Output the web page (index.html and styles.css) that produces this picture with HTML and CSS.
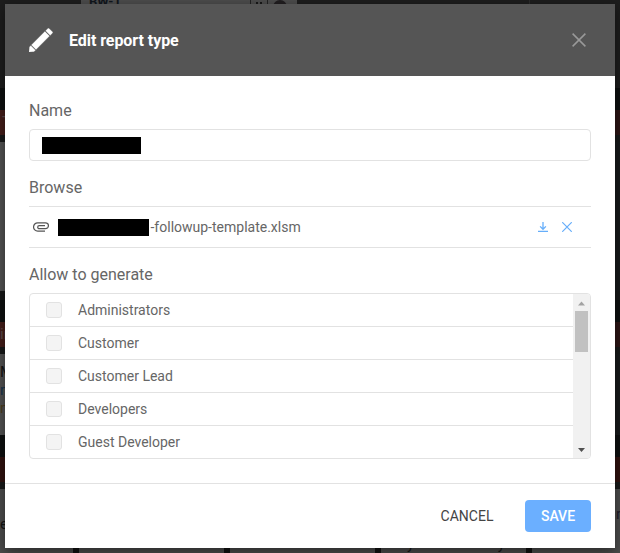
FILE: index.html
```html
<!DOCTYPE html>
<html lang="en">
<head>
<meta charset="utf-8">
<title>Edit report type</title>
<link rel="stylesheet" href="styles.css">
</head>
<body>
<div class="board" aria-hidden="true">
  <div class="lane lane-top"><span class="top-card"><b>BW-1</b><i class="pager"></i><i class="avatar"></i></span><span class="top-line"></span></div>
  <div class="gap"></div>
  <div class="bar">T</div>
  <div class="shade"></div>
  <div class="lane lane-first"><span class="side-card"></span></div>
  <div class="shade shade-short"></div>
  <div class="gap"></div>
  <div class="bar bar-mid">in</div>
  <div class="shade"></div>
  <div class="lane lane-second"><span class="side-card"><span>M</span><span class="blue">m</span><span class="gold">m</span></span></div>
  <div class="gap"></div>
  <div class="bar bar-low"></div>
  <div class="shade"></div>
  <div class="lane lane-cards"><span>e</span><span></span><span></span><span class="cut">y y</span><span class="last">r</span></div>
</div>
<div class="overlay">
<section class="modal" role="dialog">
  <header class="modal-header">
    <svg class="pencil" width="24" height="24" viewBox="0 0 24 24"><path d="M0 24 .6 18.900 1.800 17.700 6.300 22.200 5.100 23.400zM2.500 17 15.900 3.600 20.400 8.100 7 21.500zM16.700 2.800 19 .5 20 .5 23.500 4 23.500 5 21.200 7.300z" fill="#fff" stroke="#fff" stroke-width=".3"/></svg>
    <h1>Edit report type</h1>
    <svg class="close" width="14" height="14" viewBox="0 0 14 14"><path d="M.6.6 13.400 13.400M13.400.6.6 13.400" stroke="#999" stroke-width="1.500"/></svg>
  </header>
  <div class="modal-body">
    <label class="label">Name</label>
    <div class="input"><span class="redacted"></span></div>
    <div class="label">Browse</div>
    <div class="file">
      <svg class="clip" width="16" height="10" viewBox="0 0 16 10"><path d="M12 9.100H4.700a4.150 4.150 0 0 1 0-8.300h7.800a2.950 2.950 0 0 1 0 5.900H6.200a1.500 1.500 0 0 1 0-3H12" fill="none" stroke="#555" stroke-width="1.200"/></svg>
      <span class="redacted redacted-file"></span><span class="file-name">-followup-template.xlsm</span>
      <svg class="download" width="10" height="10" viewBox="0 0 10 10"><path d="M5 0v7M2.100 4.400 5 7.300l2.900-2.900M0 9.500h10" fill="none" stroke="#66aefa" stroke-width="1.300"/></svg>
      <svg class="remove" width="10" height="10" viewBox="0 0 10 10"><path d="m.2.2 9.600 9.600M9.800.2.2 9.800" stroke="#66aefa" stroke-width="1.200"/></svg>
    </div>
    <div class="label">Allow to generate</div>
    <div class="picker">
      <ul>
        <li><i class="check"></i>Administrators</li>
        <li><i class="check"></i>Customer</li>
        <li><i class="check"></i>Customer Lead</li>
        <li><i class="check"></i>Developers</li>
        <li><i class="check"></i>Guest Developer</li>
      </ul>
      <div class="scrollbar">
        <svg width="17" height="17" viewBox="0 0 17 17"><path d="M5 11.500h7L8.500 7.500z" fill="#a3a3a3"/></svg>
        <span class="thumb"></span>
        <svg class="down" width="17" height="17" viewBox="0 0 17 17"><path d="M5 7h7l-3.500 4z" fill="#505050"/></svg>
      </div>
    </div>
  </div>
  <footer class="modal-footer">
    <button class="cancel">CANCEL</button>
    <button class="save">SAVE</button>
  </footer>
</section>
</div>
</body>
</html>
```
FILE: styles.css
```css
* { box-sizing: border-box; }
body {
  margin: 0;
  height: 553px;
  overflow: hidden;
  position: relative;
  background: #181a1b;
  color: #666;
  font-family: Roboto, "Liberation Sans", sans-serif;
}

/* dimmed board behind the dialog */
.board { height: 553px; font-size: 15px; line-height: 18px; color: #141414; }
.gap { height: 22px; background: #0e1010; }
.bar { height: 25px; padding: 3px 0 0 2px; color: #5c4a49; background: linear-gradient(90deg, #441e1a 50%, #2c1515 50%); }
.bar-mid { padding-left: 0; }
.bar-low { background: #30120f; }
.shade { height: 7px; background: #181919; }
.shade-short { height: 9px; }
.lane { display: flex; overflow: hidden; }
.lane-top { height: 88px; background: #1d1d1d; }
.top-card {
  display: flex;
  width: 216px;
  height: 76px;
  margin-left: 81px;
  padding-left: 8px;
  background: #4c4c4c;
  color: #11161c;
  font-size: 13px;
  line-height: 14px;
}
.top-card b { margin-top: -5px; }
.pager { width: 18px; height: 8px; margin-left: auto; border: solid #222; border-width: 0 1px; background: radial-gradient(circle at 6px 3px, #181818 1px, transparent 1.5px), radial-gradient(circle at 10px 3px, #181818 1px, transparent 1.5px); }
.avatar { width: 14px; height: 14px; margin: 0 10px 0 5px; border-radius: 50%; background: #211e20; }
.top-line { width: 1px; height: 4px; margin-left: 232px; background: #2b2b2b; }
.lane-first { height: 149px; }
.lane-second { height: 81px; }
.side-card { width: 10px; height: 100%; background: #525252; }
.lane-second .side-card { display: flex; flex-direction: column; padding-top: 9px; }
.blue { color: #17324c; }
.gold { color: #4a3c1c; }
.lane-cards { height: 64px; gap: 6px; background: #111; }
.lane-cards span { flex: 0 0 145px; background: #4c4c4c; }
.lane-cards span:first-child { flex-basis: 73px; padding-top: 26px; }
.lane-cards .cut { padding: 46px 0 0 26px; word-spacing: 80px; }
.lane-cards .last { flex: 1; padding: 16px 0 0 84px; color: #211a29; }

/* dialog */
.overlay { position: absolute; inset: 4px 5px 5px; }
.modal {
  display: flex;
  flex-direction: column;
  height: 544px;
  background: #fff;
  box-shadow: 0 4px 12px rgba(0, 0, 0, .45);
}
.modal-header { display: flex; align-items: center; height: 72px; padding: 0 29px 0 24px; background: #555; }
.modal-header h1 { margin: 2px 0 0 16px; color: #fff; font-size: 16px; font-weight: 700; line-height: 20px; letter-spacing: -.06px; }
.close { margin-left: auto; }
.modal-body { flex: 1; padding: 24px 24px 0; }
.label { display: block; height: 19px; margin-bottom: 10px; font-size: 16px; line-height: 21px; }
.input { display: flex; align-items: center; height: 32px; margin-bottom: 16px; padding-left: 12px; border: 1px solid #e2e2e2; border-radius: 4px; }
.redacted { width: 99px; height: 17px; background: #000; }
.input .redacted { margin-top: 1px; }
.file { display: flex; align-items: center; height: 42px; margin-bottom: 16px; padding: 0 19px 0 4px; border: solid #e2e2e2; border-width: 1px 0; font-size: 14px; }
.clip { margin-right: 9px; }
.redacted-file { width: 91px; margin-top: 1px; }
.file-name { margin-left: 1.500px; }
.download { margin-left: auto; }
.remove { margin-left: 14px; }
.picker { display: flex; height: 166px; border: 1px solid #e2e2e2; border-radius: 4px; overflow: hidden; }
.picker ul { flex: 1; margin: 0; padding: 0; list-style: none; }
.picker li { display: flex; align-items: center; height: 33px; padding-left: 16px; border-bottom: 1px solid #e2e2e2; font-size: 14px; }
.picker li:last-child { border-bottom: 0; height: 32px; }
.check { width: 16px; height: 16px; margin-right: 16px; border: 1px solid #e2e2e2; border-radius: 3px; background: #f4f4f4; }
.scrollbar { display: flex; flex-direction: column; width: 17px; background: #f1f1f1; }
.thumb { height: 41px; margin: 0 2px; background: #c1c1c1; }
.down { margin-top: auto; }
.modal-footer { display: flex; justify-content: flex-end; height: 65px; padding: 16px 24px; border-top: 1px solid #e2e2e2; }
button { height: 32px; padding: 0; border: 0; border-radius: 4px; font: 14px Roboto, sans-serif; }
.cancel { width: 84px; margin-right: 16px; background: none; color: #444; }
.save { width: 66px; background: #6bafff; color: #fff; font-weight: 500; }
```
